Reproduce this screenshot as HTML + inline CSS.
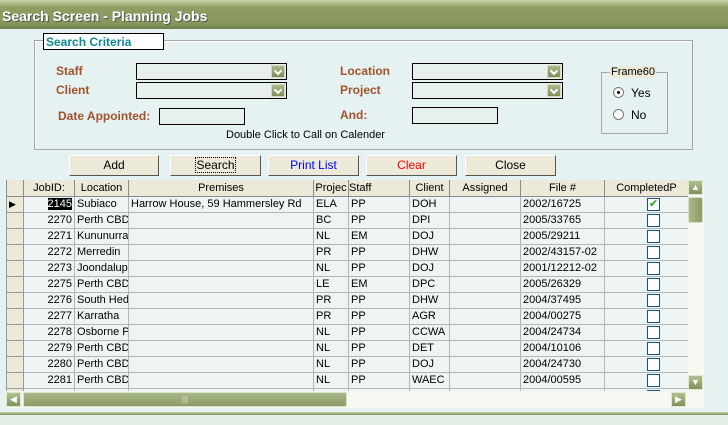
<!DOCTYPE html>
<html><head><meta charset="utf-8"><style>
*{box-sizing:border-box;margin:0;padding:0}
body{width:728px;height:425px;overflow:hidden;background:#e6f2f1;font-family:"Liberation Sans",sans-serif;font-size:11px;position:relative}
.a{position:absolute}
.title{left:0;top:0;width:728px;height:29px;background:linear-gradient(#c9d3a4,#8f9f64 25%,#87975d 80%,#6f7f48);color:#fff;font:bold 14px "Liberation Sans",sans-serif;padding:8px 0 0 2px;text-shadow:1px 1px 0 #555}
.frame{border:1px solid #a6a6a6;box-shadow:1px 1px 0 #fff inset}
.lbl{color:#a0522d;font:bold 12px "Liberation Sans",sans-serif}
.cb{background:#e8f0ee;border:1px solid #000;height:17px}
.cb i{position:absolute;right:1px;top:1px;width:14px;height:13px;background:linear-gradient(#a8b888,#7e905a);border:1px solid #d0d8c0}
.cb i:after{content:"";position:absolute;left:3px;top:2px;width:4px;height:4px;border-right:2px solid #fff;border-bottom:2px solid #fff;transform:rotate(45deg)}
.tb{background:#e8f0ee;border:1px solid #000;height:17px}
.btn{height:21px;background:#ece9d8;border:1px solid;border-color:#fff #555 #555 #fff;text-align:center;line-height:19px;font-size:12px}
table{border-collapse:collapse;table-layout:fixed;font-size:11px;font-family:"Liberation Sans",sans-serif}
td{border:1px solid #aeb8b8;height:16px;white-space:nowrap;overflow:hidden;padding:0 2px;line-height:14px}
th{background:#ece9d8;border:1px solid #8a8a8a;border-top:none;height:16px;font-weight:normal;white-space:nowrap;overflow:hidden;line-height:14px}
tbody td{background:#eef4f3}
td.sel{background:#ece9d8;border-color:#999}
td.r{text-align:right}
.chk{display:inline-block;width:13px;height:13px;border:1px solid #1c5180;background:#fff;vertical-align:middle;margin-left:40px}
</style></head><body>
<div class="a title">Search Screen - Planning Jobs</div>
<div class="a frame" style="left:34px;top:40px;width:659px;height:110px"></div>
<div class="a" style="left:43px;top:33px;width:121px;height:17px;background:#fff;border:1px solid #000;color:#0a8a96;font:bold 12px 'Liberation Sans',sans-serif;padding:1px 0 0 2px">Search Criteria</div>
<div class="a lbl" style="left:56px;top:64px">Staff</div>
<div class="a lbl" style="left:56px;top:83px">Client</div>
<div class="a lbl" style="left:58px;top:109px">Date Appointed:</div>
<div class="a lbl" style="left:340px;top:64px">Location</div>
<div class="a lbl" style="left:340px;top:83px">Project</div>
<div class="a lbl" style="left:340px;top:108px">And:</div>
<div class="a cb" style="left:136px;top:63px;width:151px"><i></i></div>
<div class="a cb" style="left:136px;top:82px;width:151px"><i></i></div>
<div class="a cb" style="left:412px;top:63px;width:151px"><i></i></div>
<div class="a cb" style="left:412px;top:82px;width:151px"><i></i></div>
<div class="a tb" style="left:159px;top:108px;width:86px"></div>
<div class="a tb" style="left:412px;top:107px;width:86px"></div>
<div class="a" style="left:226px;top:129px;font-size:11px">Double Click to Call on Calender</div>
<div class="a frame" style="left:601px;top:72px;width:67px;height:62px;box-shadow:none"></div>
<div class="a" style="left:610px;top:66px;background:#ece9d8;padding:0 1px;font-size:11px">Frame60</div>
<div class="a" style="left:613px;top:87px;width:11px;height:11px;border-radius:50%;background:#fff;border:1px solid #777"><div style="width:3px;height:3px;background:#000;border-radius:50%;margin:3px"></div></div>
<div class="a" style="left:631px;top:86px;font-size:12px">Yes</div>
<div class="a" style="left:613px;top:109px;width:11px;height:11px;border-radius:50%;background:#fff;border:1px solid #777"></div>
<div class="a" style="left:631px;top:108px;font-size:12px">No</div>
<div class="a btn" style="left:69px;top:155px;width:90px">Add</div>
<div class="a btn" style="left:170px;top:155px;width:91px"><span style="outline:1px dotted #000">Search</span></div>
<div class="a btn" style="left:268px;top:155px;width:91px;color:#00f">Print List</div>
<div class="a btn" style="left:366px;top:155px;width:91px;color:#f00">Clear</div>
<div class="a btn" style="left:465px;top:155px;width:91px">Close</div>
<div class="a" style="left:6px;top:180px;width:682px;height:211px;overflow:hidden;background:#eef4f3">
<table style="width:682px">
<colgroup><col style="width:17px"><col style="width:51px"><col style="width:54px"><col style="width:185px"><col style="width:35px"><col style="width:61px"><col style="width:40px"><col style="width:71px"><col style="width:84px"><col style="width:84px"></colgroup>
<thead><tr><th></th><th>JobID:</th><th>Location</th><th>Premises</th><th>Projec</th><th style="text-align:left">Staff</th><th>Client</th><th>Assigned</th><th>File #</th><th>CompletedP</th></tr></thead>
<tbody>
<tr><td class="sel" style="font-size:9px">&#9654;</td><td class="r"><span style="background:#000;color:#fff">2145</span></td><td>Subiaco</td><td>Harrow House, 59 Hammersley Rd</td><td>ELA</td><td>PP</td><td>DOH</td><td></td><td>2002/16725</td><td><span class="chk" style="color:#2a9a2a;font-size:11px;line-height:11px;text-align:center">&#10004;</span></td></tr>
<tr><td class="sel"></td><td class="r">2270</td><td>Perth CBD</td><td></td><td>BC</td><td>PP</td><td>DPI</td><td></td><td>2005/33765</td><td><span class="chk"></span></td></tr>
<tr><td class="sel"></td><td class="r">2271</td><td>Kununurra</td><td></td><td>NL</td><td>EM</td><td>DOJ</td><td></td><td>2005/29211</td><td><span class="chk"></span></td></tr>
<tr><td class="sel"></td><td class="r">2272</td><td>Merredin</td><td></td><td>PR</td><td>PP</td><td>DHW</td><td></td><td>2002/43157-02</td><td><span class="chk"></span></td></tr>
<tr><td class="sel"></td><td class="r">2273</td><td>Joondalup</td><td></td><td>NL</td><td>PP</td><td>DOJ</td><td></td><td>2001/12212-02</td><td><span class="chk"></span></td></tr>
<tr><td class="sel"></td><td class="r">2275</td><td>Perth CBD</td><td></td><td>LE</td><td>EM</td><td>DPC</td><td></td><td>2005/26329</td><td><span class="chk"></span></td></tr>
<tr><td class="sel"></td><td class="r">2276</td><td>South Hed</td><td></td><td>PR</td><td>PP</td><td>DHW</td><td></td><td>2004/37495</td><td><span class="chk"></span></td></tr>
<tr><td class="sel"></td><td class="r">2277</td><td>Karratha</td><td></td><td>PR</td><td>PP</td><td>AGR</td><td></td><td>2004/00275</td><td><span class="chk"></span></td></tr>
<tr><td class="sel"></td><td class="r">2278</td><td>Osborne P</td><td></td><td>NL</td><td>PP</td><td>CCWA</td><td></td><td>2004/24734</td><td><span class="chk"></span></td></tr>
<tr><td class="sel"></td><td class="r">2279</td><td>Perth CBD</td><td></td><td>NL</td><td>PP</td><td>DET</td><td></td><td>2004/10106</td><td><span class="chk"></span></td></tr>
<tr><td class="sel"></td><td class="r">2280</td><td>Perth CBD</td><td></td><td>NL</td><td>PP</td><td>DOJ</td><td></td><td>2004/24730</td><td><span class="chk"></span></td></tr>
<tr><td class="sel"></td><td class="r">2281</td><td>Perth CBD</td><td></td><td>NL</td><td>PP</td><td>WAEC</td><td></td><td>2004/00595</td><td><span class="chk"></span></td></tr>
<tr><td class="sel"></td><td></td><td></td><td></td><td></td><td></td><td></td><td></td><td></td><td><span class="chk"></span></td></tr>
</tbody></table></div>
<div class="a" style="left:688px;top:180px;width:16px;height:211px;background:#f6f8f2"></div>
<div class="a" style="left:688px;top:180px;width:15px;height:15px;background:linear-gradient(#b0c090,#80925c);border:1px solid #e0e8d0;color:#fff;font-size:9px;text-align:center;line-height:13px">&#9650;</div>
<div class="a" style="left:688px;top:197px;width:15px;height:26px;background:linear-gradient(90deg,#a8b888,#8a9c66);border:1px solid #d8e0c8;border-radius:2px"></div>
<div class="a" style="left:688px;top:375px;width:15px;height:15px;background:linear-gradient(#b0c090,#80925c);border:1px solid #e0e8d0;color:#fff;font-size:9px;text-align:center;line-height:13px">&#9660;</div>
<div class="a" style="left:6px;top:391px;width:698px;height:17px;background:#f6f8f2"></div>
<div class="a" style="left:6px;top:392px;width:15px;height:15px;background:linear-gradient(#b0c090,#80925c);border:1px solid #e0e8d0;color:#fff;font-size:9px;text-align:center;line-height:13px">&#9664;</div>
<div class="a" style="left:23px;top:392px;width:324px;height:15px;background:linear-gradient(#a8b888,#8a9c66);border:1px solid #d8e0c8;border-radius:2px;color:#dfe6d0;font-size:8px;text-align:center;line-height:13px">|||</div>
<div class="a" style="left:671px;top:392px;width:15px;height:15px;background:linear-gradient(#b0c090,#80925c);border:1px solid #e0e8d0;color:#fff;font-size:9px;text-align:center;line-height:13px">&#9654;</div>
<div class="a" style="left:0;top:412px;width:728px;height:3px;background:linear-gradient(#c8d4a8,#7f9058)"></div>
<div class="a" style="left:0;top:415px;width:728px;height:10px;background:#e4eee6"></div>
</body></html>
